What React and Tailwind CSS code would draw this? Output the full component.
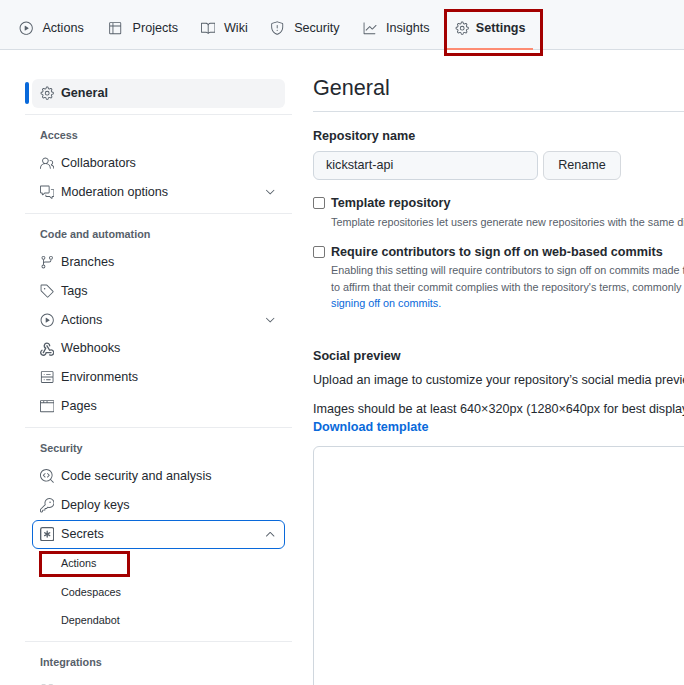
import {
  GoBook,
  GoBrowser,
  GoChevronDown,
  GoChevronUp,
  GoCodescan,
  GoCommentDiscussion,
  GoGear,
  GoGitBranch,
  GoGraph,
  GoKey,
  GoPeople,
  GoPlay,
  GoServer,
  GoShield,
  GoTable,
  GoTag,
} from "react-icons/go";

const GoApps = ({ size, className }) => (
  <svg width={size} height={size} viewBox="0 0 16 16" fill="none" stroke="currentColor" strokeWidth="1.5" className={className}>
    <rect x="1.5" y="1.5" width="5" height="5" rx="1" />
    <rect x="9.5" y="1.5" width="5" height="5" rx="1" />
    <rect x="1.5" y="9.5" width="5" height="5" rx="1" />
    <rect x="9.5" y="9.5" width="5" height="5" rx="1" />
  </svg>
);

const GoKeyAsterisk = ({ size, className }) => (
  <svg width={size} height={size} viewBox="0 0 16 16" fill="currentColor" className={className}>
    <path d="M0 2.75A2.75 2.75 0 0 1 2.75 0h10.5A2.75 2.75 0 0 1 16 2.75v10.5A2.75 2.75 0 0 1 13.25 16H2.75A2.75 2.75 0 0 1 0 13.25ZM2.75 1.5c-.69 0-1.25.56-1.25 1.25v10.5c0 .69.56 1.25 1.25 1.25h10.5c.69 0 1.25-.56 1.25-1.25V2.75c0-.69-.56-1.25-1.25-1.25Z" />
    <path d="M8 4a.75.75 0 0 1 .75.75V6.7l1.69-.975a.75.75 0 0 1 .75 1.3L9.5 8l1.69.976a.75.75 0 0 1-.75 1.298L8.75 9.3v1.951a.75.75 0 0 1-1.5 0V9.299l-1.69.976a.75.75 0 0 1-.75-1.3L6.5 8l-1.69-.975a.75.75 0 0 1 .75-1.3l1.69.976V4.75A.75.75 0 0 1 8 4Z" />
  </svg>
);

const GoWebhook = ({ size, className }) => (
  <svg width={size} height={size} viewBox="0 0 16 16" fill="currentColor" className={className}>
    <path d="M5.5 4.25a2.25 2.25 0 0 1 4.5 0 .75.75 0 0 0 1.5 0 3.75 3.75 0 1 0-6.14 2.889l-2.272 4.258a.75.75 0 0 0 1.324.706L7 7.25a.75.75 0 0 0-.309-1.015A2.25 2.25 0 0 1 5.5 4.25Z" />
    <path d="M7.364 3.607a.75.75 0 0 1 1.03.257l2.608 4.349a3.75 3.75 0 1 1-.628 6.785.75.75 0 0 1 .752-1.299 2.25 2.25 0 1 0-.033-3.88.75.75 0 0 1-1.03-.256L7.107 4.636a.75.75 0 0 1 .257-1.03Z" />
    <path d="M2.9 8.776A.75.75 0 0 1 2.625 9.8 2.25 2.25 0 1 0 6 11.75a.75.75 0 0 1 .75-.751h5.5a.75.75 0 0 1 0 1.5H7.425a3.751 3.751 0 1 1-5.55-3.998.75.75 0 0 1 1.024.274Z" />
  </svg>
);

const tabs = [
  { label: "Actions", Icon: GoPlay, tab: "pl-2 pr-2", text: "ml-[9px]" },
  { label: "Projects", Icon: GoTable, tab: "pl-2 pr-[6.5px]", text: "ml-[10.5px]" },
  { label: "Wiki", Icon: GoBook, tab: "pl-2 pr-[6px]", text: "ml-[9px]" },
  { label: "Security", Icon: GoShield, tab: "pl-2 pr-[7px]", text: "ml-[10px]" },
  { label: "Insights", Icon: GoGraph, tab: "pl-2 pr-[10px]", text: "ml-[9px]" },
];

const sections = [
  {
    title: "Access",
    items: [
      { label: "Collaborators", Icon: GoPeople },
      { label: "Moderation options", Icon: GoCommentDiscussion, chevron: true },
    ],
  },
  {
    title: "Code and automation",
    items: [
      { label: "Branches", Icon: GoGitBranch },
      { label: "Tags", Icon: GoTag },
      { label: "Actions", Icon: GoPlay, chevron: true },
      { label: "Webhooks", Icon: GoWebhook },
      { label: "Environments", Icon: GoServer },
      { label: "Pages", Icon: GoBrowser },
    ],
  },
  {
    title: "Security",
    items: [
      { label: "Code security and analysis", Icon: GoCodescan },
      { label: "Deploy keys", Icon: GoKey },
    ],
  },
];

const SideItem = ({ label, Icon, chevron }) => (
  <div className="flex h-[28.8px] items-center pl-2 pr-[8px] text-[12.6px] text-[#24292f]">
    <Icon size={14.4} className="shrink-0 text-[#57606a]" />
    <span className="ml-[6.6px]">{label}</span>
    {chevron && <GoChevronDown size={14.4} className="ml-auto text-[#57606a]" />}
  </div>
);

const SubItem = ({ label, highlighted }) => (
  <div className="relative flex h-[28.8px] items-center pl-[29px] text-[10.8px] text-[#24292f]">
    {label}
    {highlighted && (
      <div className="absolute left-[7px] top-[2px] h-[26px] w-[91px] border-[3px] border-[#a30000]" />
    )}
  </div>
);

const SideSection = ({ title, children }) => (
  <div className="border-t border-[#eaecef] pb-[6.4px] pt-[11px]">
    <h2 className="mb-[5px] pl-[15px] text-[10.8px] font-semibold leading-[18px] text-[#57606a]">
      {title}
    </h2>
    <div className="px-[7px]">{children}</div>
  </div>
);

const Sidebar = () => (
  <aside className="w-[267px] shrink-0">
    <div className="relative mx-[7px] mb-[6px] flex h-[29px] items-center rounded-md bg-[#f3f4f6] pb-px pl-2 text-[12.6px] font-semibold text-[#24292f]">
      <div className="absolute -left-[7px] top-[3px] h-[22px] w-[4px] rounded-md bg-[#0969da]" />
      <GoGear size={14.4} className="text-[#57606a]" />
      <span className="ml-[6.6px]">General</span>
    </div>

    {sections.map((section) => (
      <SideSection key={section.title} title={section.title}>
        {section.items.map((item) => (
          <SideItem key={item.label} {...item} />
        ))}
        {section.title === "Security" && (
          <>
            <div className="flex h-[28.8px] items-center rounded-md border border-[#0969da] pl-[7px] pr-[7px] text-[12.6px] text-[#24292f]">
              <GoKeyAsterisk size={14.4} className="text-[#57606a]" />
              <span className="ml-[6.6px]">Secrets</span>
              <GoChevronUp size={14.4} className="ml-auto text-[#57606a]" />
            </div>
            <SubItem label="Actions" highlighted />
            <SubItem label="Codespaces" />
            <SubItem label="Dependabot" />
          </>
        )}
      </SideSection>
    ))}

    <SideSection title="Integrations">
      <SideItem label="GitHub apps" Icon={GoApps} />
    </SideSection>
  </aside>
);

const Checkbox = () => (
  <span className="h-[12px] w-[12px] shrink-0 rounded-[2px] border border-[#767676] bg-white" />
);

const Main = () => (
  <main className="ml-[21px] min-w-0 flex-1 whitespace-nowrap text-[12.6px] text-[#24292f]">
    <h1 className="h-[33px] border-b border-[#d8dee4] text-[21.6px] leading-[17px]">General</h1>

    <h3 className="mt-[15px] font-semibold leading-[18px]">Repository name</h3>
    <div className="mt-[6px] flex gap-[5px]">
      <div className="flex h-[29px] w-[225px] items-center rounded-md border border-[#d0d7de] bg-[#f6f8fa] px-3 text-[#24292f]">
        kickstart-api
      </div>
      <button className="h-[29px] w-[78px] rounded-md border border-[#d5d9de] bg-[#f6f8fa]">Rename</button>
    </div>

    <div className="mt-[14px] flex items-center gap-[6px] leading-[18px]">
      <Checkbox />
      <span className="font-semibold">Template repository</span>
    </div>
    <p className="mt-[1px] pl-[18px] text-[10.8px] leading-[18px] text-[#57606a]">
      Template repositories let users generate new repositories with the same directory structure and files.
    </p>

    <div className="mt-[12px] flex items-center gap-[6px] leading-[18px]">
      <Checkbox />
      <span className="font-semibold">Require contributors to sign off on web-based commits</span>
    </div>
    <div className="mt-[1px] pl-[18px] text-[10.8px] leading-[16.5px] text-[#57606a]">
      <p>Enabling this setting will require contributors to sign off on commits made through GitHub's web interface.</p>
      <p>to affirm that their commit complies with the repository's terms, commonly the Developer Certificate of Origin.</p>
      <p className="text-[#0969da]">signing off on commits.</p>
    </div>

    <h3 className="mt-[35px] font-semibold leading-[18px]">Social preview</h3>
    <p className="mt-[6px] leading-[18px]">Upload an image to customize your repository’s social media preview.</p>
    <p className="mt-[11px] leading-[18px]">Images should be at least 640×320px (1280×640px for best display).</p>
    <p className="font-semibold leading-[18px] text-[#0969da]">Download template</p>
    <div className="mt-[10px] h-[400px] w-[640px] rounded-md border border-[#d0d7de]" />
  </main>
);

export default function App() {
  return (
    <div className="h-[685px] w-[684px] overflow-hidden bg-white font-['Liberation_Sans',Arial,sans-serif]">
      <nav className="relative flex h-[50px] items-start border-b border-[#d8dee4] bg-[#f6f8fa] pl-[11px] pt-[18px] text-[12.6px] text-[#24292f]">
        {tabs.map(({ label, Icon, tab, text }) => (
          <div key={label} className={`mr-2 flex h-[20px] items-center ${tab}`}>
            <Icon size={14.4} className="text-[#57606a]" />
            <span className={text}>{label}</span>
          </div>
        ))}
        <div className="relative flex h-[32px] items-start">
          <div className="flex h-[20px] items-center pl-[8px] pr-[7px] font-semibold">
            <GoGear size={14.4} className="text-[#57606a]" />
            <span className="ml-[6px]">Settings</span>
          </div>
          <div className="absolute bottom-0 left-0 right-0 h-[2px] bg-[#fd8c73]" />
        </div>
        <div className="absolute left-[444px] top-[9px] h-[47px] w-[99px] border-[3px] border-[#a30000]" />
      </nav>

      <div className="flex items-start pl-[25px] pt-[29px]">
        <Sidebar />
        <Main />
      </div>
    </div>
  );
}
